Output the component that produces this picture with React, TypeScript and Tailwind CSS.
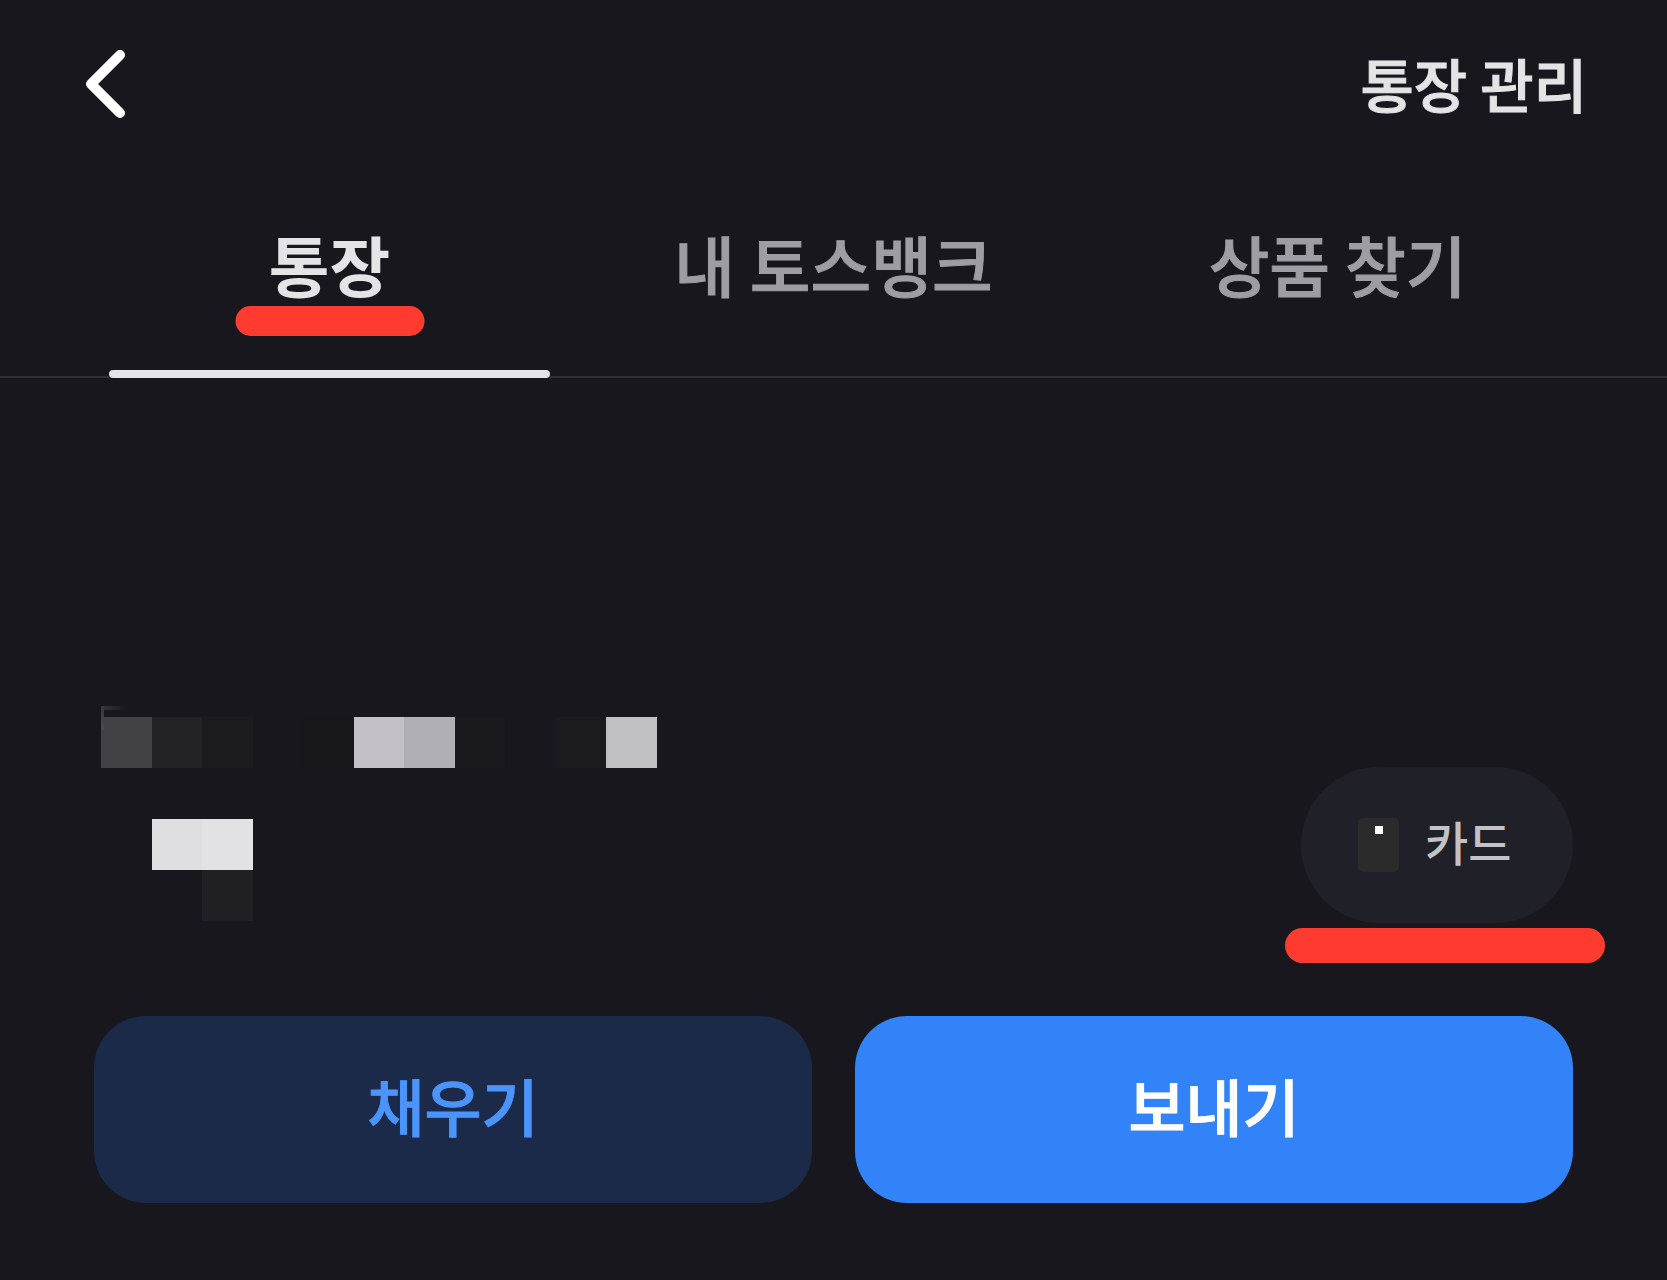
import { useState } from 'react'

const tabs = ['통장', '내 토스뱅크', '상품 찾기']

// masked account name and balance, 11 columns per row
const maskRows = [
  ['bg-[#424145]', 'bg-[#222126]', 'bg-[#1b1a1f]', '', 'bg-[#17161b]', 'bg-[#c3c1c7]', 'bg-[#b0afb5]', 'bg-[#1a191e]', '', 'bg-[#1b1a1f]', 'bg-[#c0bfc4]'],
  ['', '', '', '', '', '', '', '', '', '', ''],
  ['', 'bg-[#dfdfe1]', 'bg-[#e2e2e4]', '', '', '', '', '', '', '', ''],
  ['', '', 'bg-[#201f24]', '', '', '', '', '', '', '', ''],
]

function Header() {
  return (
    <header className="flex h-[168px] items-center justify-between pl-[84px] pr-[80px]">
      <button type="button" aria-label="뒤로" className="flex">
        <svg width="44" height="72" viewBox="0 0 44 72" fill="none">
          <path d="M36 7L7 36L36 65" stroke="#fff" strokeWidth="10" strokeLinecap="round" strokeLinejoin="round" />
        </svg>
      </button>
      <button
        type="button"
        className="pb-[2px] text-[58px] leading-[80px] font-medium text-[#e4e4e7] [-webkit-text-stroke:1px]"
      >
        통장 관리
      </button>
    </header>
  )
}

function MaskedAccount() {
  return (
    <div className="relative ml-[7px] w-[556px]">
      {maskRows.map((row, i) => (
        <div key={i} className="grid h-[51px] grid-cols-11">
          {row.map((cell, j) => (
            <div key={j} className={cell} />
          ))}
        </div>
      ))}
      <div className="absolute -top-[11px] left-0 h-[4px] w-[26px] bg-linear-to-r from-[#38373b] to-transparent" />
      <div className="absolute -top-[11px] left-0 h-[24px] w-[3px] bg-linear-to-b from-[#38373b] to-[#4c4b4f]" />
    </div>
  )
}

export default function App() {
  const [active, setActive] = useState(0)

  return (
    <div className="min-h-screen bg-[#18171d] font-['Noto_Sans_CJK_KR',sans-serif]">
      <Header />

      <nav className="grid grid-cols-3 gap-[63px] border-b-2 border-[#2d2d33] px-[109px]">
        {tabs.map((tab, i) => (
          <button
            key={tab}
            type="button"
            onClick={() => setActive(i)}
            className={`relative h-[208px] pb-[18px] text-[66px] leading-[96px] ${
              i === active
                ? 'font-bold text-[#e4e4e7]'
                : 'font-medium text-[#9e9da4] [-webkit-text-stroke:1px]'
            }`}
          >
            {tab}
            {i === 0 && (
              <span className="absolute top-[138px] left-1/2 h-[30px] w-[189px] -translate-x-1/2 rounded-full bg-[#ff3b30]" />
            )}
            {i === active && (
              <span className="absolute inset-x-0 -bottom-[2px] h-[8px] rounded-full bg-[#e4e4e7]" />
            )}
          </button>
        ))}
      </nav>

      <main className="px-[94px] pt-[339px] pb-[77px]">
        <section className="flex h-[206px] items-start justify-between">
          <MaskedAccount />
          <button
            type="button"
            className="relative flex h-[156px] w-[272px] items-center gap-[26px] self-end rounded-full bg-[#202128] pl-[57px] text-[47px] leading-[64px] font-medium text-[#c3c2c8]"
          >
            <svg width="41" height="54" viewBox="0 0 41 54">
              <rect width="41" height="54" rx="5" fill="#2b2b2b" />
              <rect x="17" y="8" width="8" height="8" fill="#fff" />
            </svg>
            <span className="pb-[8px]">카드</span>
            <span className="absolute -inset-x-[16px] -bottom-[40px] mr-[-16px] h-[35px] rounded-full bg-[#ff3b30]" />
          </button>
        </section>

        <div className="mt-[93px] grid grid-cols-2 gap-[43px]">
          <button
            type="button"
            className="h-[187px] rounded-[52px] bg-[#1b2a48] pb-[10px] text-[62px] leading-[96px] font-medium text-[#4b94fb] [-webkit-text-stroke:1px]"
          >
            채우기
          </button>
          <button
            type="button"
            className="h-[187px] rounded-[52px] bg-[#3282f8] pb-[10px] text-[62px] leading-[96px] font-medium text-white [-webkit-text-stroke:1px]"
          >
            보내기
          </button>
        </div>
      </main>
    </div>
  )
}
